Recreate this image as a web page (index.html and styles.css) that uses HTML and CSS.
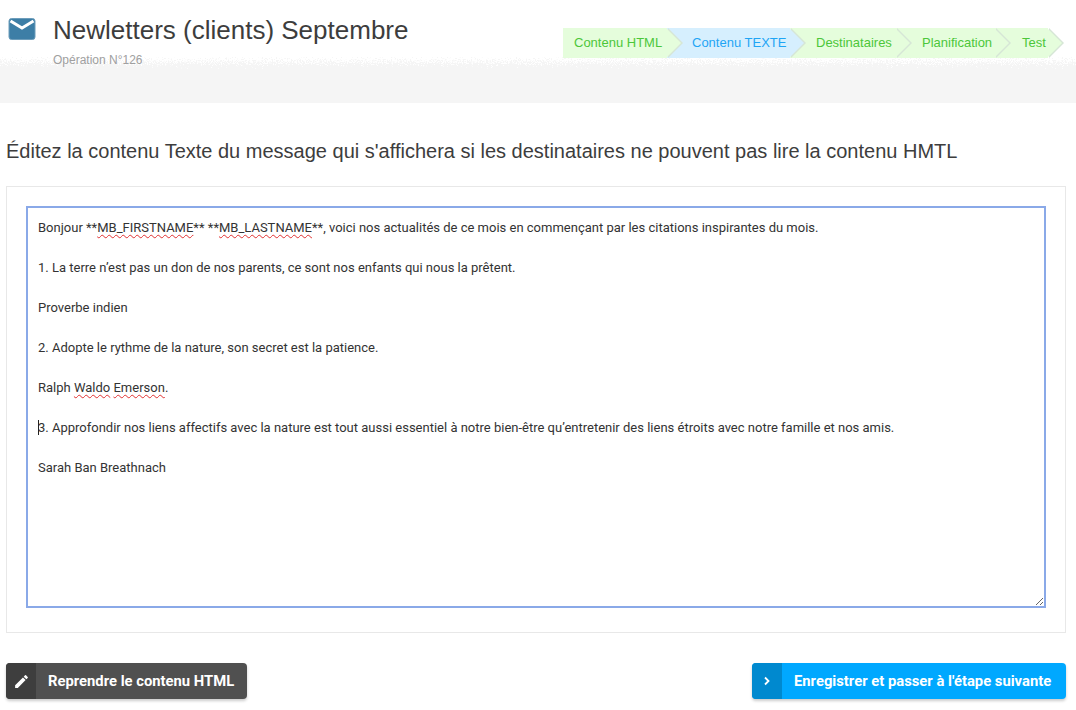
FILE: index.html
```html
<!DOCTYPE html>
<html lang="fr">
<head>
  <meta charset="UTF-8" />
  <title>Newletters (clients) Septembre</title>
  <link rel="stylesheet" href="styles.css">
</head>
<body>

  <!-- en-tete -->
  <div class="header">
    <div class="title-block">
      <svg class="mail-icon" viewBox="0 0 28 22" width="28" height="22">
        <rect x="1" y="0.5" width="26" height="21" rx="2.5" fill="#3d7ea6" stroke="#6d9dbb" />
        <path d="M2.5 3 L14 10 L25.5 3" fill="none" stroke="#fff" stroke-width="3" />
      </svg>
      <div>
        <h1>Newletters (clients) Septembre</h1>
        <div class="subtle">Opération N°126</div>
      </div>
    </div>
    <div class="steps">
      <div class="step step-1">Contenu HTML</div>
      <div class="step step-2 current">Contenu TEXTE</div>
      <div class="step step-3">Destinataires</div>
      <div class="step step-4">Planification</div>
      <div class="step step-5">Test</div>
    </div>
  </div>

  <h2 class="page-title">Éditez la contenu Texte du message qui s'affichera si les destinataires ne pouvent pas lire la contenu HMTL</h2>

  <div class="panel">
    <div class="editor">
      <p>Bonjour **<span class="typo">MB_FIRSTNAME</span>** **<span class="typo">MB_LASTNAME</span>**, voici nos actualités de ce mois en commençant par les citations inspirantes du mois.</p>
      <p>1. La terre n’est pas un don de nos parents, ce sont nos enfants qui nous la prêtent.</p>
      <p>Proverbe indien</p>
      <p>2. Adopte le rythme de la nature, son secret est la patience.</p>
      <p>Ralph <span class="typo">Waldo</span> <span class="typo">Emerson</span>.</p>
      <p><span class="caret"></span>3. Approfondir nos liens affectifs avec la nature est tout aussi essentiel à notre bien-être qu’entretenir des liens étroits avec notre famille et nos amis.</p>
      <p>Sarah Ban Breathnach</p>
    </div>
  </div>

  <div class="actions">
    <a class="btn btn-dark">
      <span class="btn-icon">
        <svg viewBox="0 0 24 24" width="17" height="17"><path fill="#fff" d="M3 17.25V21h3.75L17.81 9.94l-3.75-3.75L3 17.25zM20.71 7.04a1 1 0 0 0 0-1.41l-2.34-2.34a1 1 0 0 0-1.41 0l-1.83 1.83 3.75 3.75 1.83-1.83z"/></svg>
      </span>
      <span class="btn-label">Reprendre le contenu HTML</span>
    </a>
    <a class="btn btn-blue">
      <span class="btn-icon">
        <svg viewBox="0 0 10 10" width="10" height="10"><path fill="none" stroke="#fff" stroke-width="1.8" d="M3 1.5 L6.5 5 L3 8.5"/></svg>
      </span>
      <span class="btn-label">Enregistrer et passer à l'étape suivante</span>
    </a>
  </div>

</body>
</html>
```

FILE: styles.css
```css
html, body {
  overflow: hidden;
}

body {
  font-family: "Liberation Sans", Arial, sans-serif;
  margin: 0;
  height: 710px;
  background: #fff;
  color: #333;
}

.header {
  height: 103px;
  box-sizing: border-box;
  display: flex;
  justify-content: space-between;
  align-items: flex-start;
  padding: 28px 28px 0 8px;
  background:
    url("data:image/svg+xml,%3Csvg xmlns='http://www.w3.org/2000/svg' width='400' height='12'%3E%3Cdefs%3E%3ClinearGradient id='g' x1='0' y1='0' x2='0' y2='1'%3E%3Cstop offset='0' stop-color='%23fff' stop-opacity='.9'/%3E%3Cstop offset='1' stop-color='%23fff' stop-opacity='.1'/%3E%3C/linearGradient%3E%3Cfilter id='n' x='0' y='0' width='100%25' height='100%25' color-interpolation-filters='sRGB'%3E%3CfeTurbulence type='fractalNoise' baseFrequency='.8' numOctaves='2' seed='4' result='t'/%3E%3CfeColorMatrix in='t' type='matrix' values='0 0 0 0 0 0 0 0 0 0 0 0 0 0 0 1.6 0 0 0 -.3' result='a'/%3E%3CfeComposite in='SourceGraphic' in2='a' operator='arithmetic' k1='0' k2='6' k3='6' k4='-6' result='m'/%3E%3CfeFlood flood-color='%23fff'/%3E%3CfeComposite in2='m' operator='in'/%3E%3C/filter%3E%3C/defs%3E%3Crect width='400' height='12' fill='url(%23g)' filter='url(%23n)'/%3E%3C/svg%3E") 0 57px repeat-x,
    linear-gradient(to bottom, #fff 0, #fff 57px, #f5f5f5 57px, #f5f5f5 100%);
}

.title-block {
  display: flex;
  align-items: flex-start;
  margin-top: -10px;
  gap: 17px;
}

h1 {
  font-size: 26px;
  font-weight: normal;
  line-height: 28px;
  margin: -2px 0 0 0;
  color: #3d3d3d;
}

.subtle {
  color: #a0a0a0;
  font-size: 12px;
  line-height: 14px;
  margin-top: 9px;
}

.steps {
  display: flex;
  height: 30px;
}

.step {
  position: relative;
  height: 30px;
  line-height: 29px;
  box-sizing: border-box;
  font-size: 13px;
  background: #e5fddc;
  color: #4cc73a;
  padding-left: 11px;
}

.step::before,
.step::after {
  content: "";
  position: absolute;
  top: 0;
  left: 100%;
  border-style: solid;
  border-width: 15px 0 15px 15px;
  border-color: transparent transparent transparent #d6e6d6;
  z-index: 1;
}

.step::after {
  margin-left: -1px;
  border-left-color: #e5fddc;
  z-index: 2;
}

.step::before {
  margin-left: 1px;
}

.step-1 { width: 104px; }
.step-2 { width: 123px; padding-left: 25px; }
.step-3 { width: 106px; padding-left: 26px; }
.step-4 { width: 99px; padding-left: 26px; }
.step-5 { width: 53px; padding-left: 27px; }

.step.current {
  background: #d6effe;
  color: #1fa5f5;
}

.step.current::after {
  border-left-color: #d6effe;
}

.page-title {
  font-size: 20px;
  font-weight: normal;
  line-height: 24px;
  margin: 36px 6px 23px 6px;
  color: #3d3d3d;
}

.panel {
  margin: 0 10px 0 6px;
  height: 447px;
  box-sizing: border-box;
  border: 1px solid #e8e8e8;
  padding: 19px;
}

.editor {
  height: 402px;
  box-sizing: border-box;
  border: 2px solid #8aa9e8;
  padding: 10px;
  font-family: Roboto, Arial, sans-serif;
  font-size: 13px;
  line-height: 20px;
  color: #333;
  overflow: auto;
  resize: vertical;
}

.editor p {
  margin: 0 0 20px 0;
}

.typo {
  text-decoration: underline wavy #e03030 1px;
  text-underline-offset: 2px;
}

.caret {
  display: inline-block;
  width: 1px;
  height: 15px;
  margin-right: -1px;
  vertical-align: -3px;
  background: #222;
}

.actions {
  display: flex;
  justify-content: space-between;
  margin: 30px 10px 0 6px;
}

.btn {
  display: flex;
  height: 36px;
  border-radius: 4px;
  overflow: hidden;
  color: #fff;
  font-family: Roboto, Arial, sans-serif;
  font-size: 14.8px;
  font-weight: 700;
  line-height: 36px;
  box-shadow: 0 2px 3px rgba(0, 0, 0, 0.2);
}

.btn-icon {
  width: 30px;
  flex-shrink: 0;
  display: flex;
  align-items: center;
  justify-content: center;
}

.btn-label {
  padding: 0 12px;
  white-space: nowrap;
}

.btn-dark { background: #505050; width: 241px; }
.btn-dark .btn-icon { background: #3e3e3e; }

.btn-blue { background: #00a8ff; width: 314px; }
.btn-blue .btn-icon { background: #0089cf; }
```
